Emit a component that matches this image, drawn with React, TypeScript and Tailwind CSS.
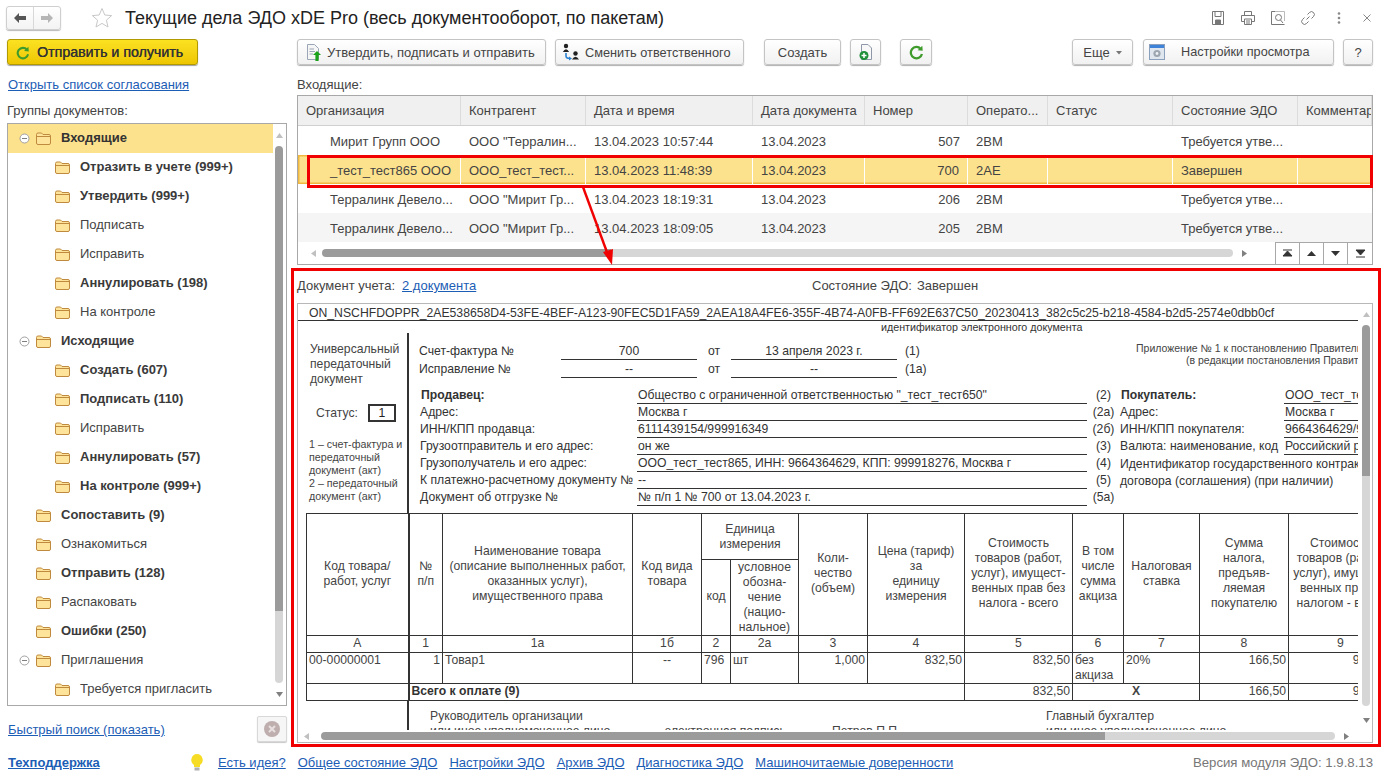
import React from "react";

const Folder = ({ className = "" }: { className?: string }) => (
  <svg width="15" height="13" viewBox="0 0 15 13" className={"shrink-0 " + className}>
    <path d="M.5 2.5 Q.5 1 2 1 H5.5 L7 2.5 H13 Q14.5 2.5 14.5 4 V11 Q14.5 12.5 13 12.5 H2 Q.5 12.5 .5 11 Z" fill="#fde49a" stroke="#c08a3e" />
    <path d="M1 4.5 H14" stroke="#c08a3e" strokeWidth="1" />
  </svg>
);

const Minus = () => (
  <svg width="11" height="11" viewBox="0 0 11 11" className="shrink-0">
    <circle cx="5.5" cy="5.5" r="4.5" fill="#fff" stroke="#a0a0a0" />
    <path d="M3 5.5 H8" stroke="#808080" />
  </svg>
);

const Refresh = ({ s = 16 }: { s?: number }) => (
  <svg width={s} height={s} viewBox="0 0 16 16" className="shrink-0">
    <path d="M12.5 4.2 A6 6 0 1 0 13.8 9.5" fill="none" stroke="#3f9b2b" strokeWidth="2.4" />
    <path d="M9.2 5.6 L14.6 6.2 L14.2 .8 Z" fill="#3f9b2b" />
  </svg>
);

const TriUp = () => <svg width="7" height="5" viewBox="0 0 7 5"><path d="M0 5 L3.5 0 L7 5Z" fill="#c0c0c0" /></svg>;
const TriDown = () => <svg width="7" height="5" viewBox="0 0 7 5"><path d="M0 0 L3.5 5 L7 0Z" fill="#808080" /></svg>;
const TriLeft = () => <svg width="5" height="7" viewBox="0 0 5 7"><path d="M5 0 L0 3.5 L5 7Z" fill="#c0c0c0" /></svg>;
const TriRight = () => <svg width="5" height="7" viewBox="0 0 5 7"><path d="M0 0 L5 3.5 L0 7Z" fill="#808080" /></svg>;

const Btn = ({ className = "", children }: { className?: string; children: React.ReactNode }) => (
  <div className={"h-[26px] pt-[2px] shrink-0 flex items-center border border-[#c4c4c4] rounded-[3px] bg-gradient-to-b from-white to-[#f1f1f1] shadow-[0_1px_1px_#b0b0b0] text-[#444] " + className}>
    {children}
  </div>
);

type T = [string, number, boolean, boolean];
const tree: T[] = [
  ["Входящие", 0, true, true],
  ["Отразить в учете (999+)", 1, true, false],
  ["Утвердить (999+)", 1, true, false],
  ["Подписать", 1, false, false],
  ["Исправить", 1, false, false],
  ["Аннулировать (198)", 1, true, false],
  ["На контроле", 1, false, false],
  ["Исходящие", 0, true, true],
  ["Создать (607)", 1, true, false],
  ["Подписать (110)", 1, true, false],
  ["Исправить", 1, false, false],
  ["Аннулировать (57)", 1, true, false],
  ["На контроле (999+)", 1, true, false],
  ["Сопоставить (9)", 0, true, false],
  ["Ознакомиться", 0, false, false],
  ["Отправить (128)", 0, true, false],
  ["Распаковать", 0, false, false],
  ["Ошибки (250)", 0, true, false],
  ["Приглашения", 0, false, true],
  ["Требуется пригласить", 1, false, false],
];

const cols = ["Организация", "Контрагент", "Дата и время", "Дата документа", "Номер", "Операто...", "Статус", "Состояние ЭДО", "Комментарий"];
const rows = [
  ["Мирит Групп ООО", 'ООО "Терралин...', "13.04.2023 10:57:44", "13.04.2023", "507", "2BM", "", "Требуется утве...", ""],
  ["_тест_тест865 ООО", "ООО_тест_тест...", "13.04.2023 11:48:39", "13.04.2023", "700", "2AE", "", "Завершен", ""],
  ["Терралинк Девело...", 'ООО "Мирит Гр...', "13.04.2023 18:19:31", "13.04.2023", "206", "2BM", "", "Требуется утве...", ""],
  ["Терралинк Девело...", 'ООО "Мирит Гр...', "13.04.2023 18:09:05", "13.04.2023", "205", "2BM", "", "Требуется утве...", ""],
];

const th = "border border-[#333] text-center align-middle font-normal p-0 text-[12.2px] leading-[15px]";
const thr = "border border-[#333] text-center align-middle font-normal p-0 pb-[2px] text-[12.2px] leading-[15px]";
const td = "border border-[#333] align-top p-0 text-[12.2px] leading-[15px]";

const SellerRow = ({ label, value, code, bold, buyer, bval, low }: { label: string; value: string; code: string; bold?: boolean; buyer?: string; bval?: string; low?: boolean }) => (
  <div className="h-[17px] flex items-end whitespace-nowrap">
    <div className={"w-[217px] shrink-0 pb-[1px] " + (bold ? "font-bold pl-[1px]" : "")}>{label}</div>
    <div className="w-[450px] shrink-0 border-b border-[#333] pl-[1px] h-[17px] leading-[16px]">{value}</div>
    <div className="w-[33px] shrink-0 text-center pb-[1px]">{code}</div>
    <div className={"w-[164px] shrink-0 " + (low ? "" : "pb-[1px] ") + (buyer === "Покупатель:" ? "font-bold pl-[1px]" : "")}>{buyer}</div>
    {bval !== undefined && <div className="w-[100px] shrink-0 border-b border-[#333] pl-[1px] h-[17px] leading-[16px]">{bval}</div>}
  </div>
);

export default function App() {
  return (
    <div className="w-[1382px] h-[771px] relative overflow-hidden bg-white font-['Liberation_Sans',Arial,sans-serif] text-[13px] text-[#444]">
      {/* header */}
      <div className="h-[36px] flex items-center pl-[6px] pr-[10px]">
        <div className="w-[55px] h-[24px] flex border border-[#cfcfcf] rounded-[3px] shadow-[0_1px_1px_#b8b8b8] bg-gradient-to-b from-white to-[#f3f3f3]">
          <div className="w-[27px] flex items-center justify-center border-r border-[#d8d8d8]">
            <svg width="12" height="10" viewBox="0 0 12 10"><path d="M0 5 L5 0 V3 H12 V7 H5 V10Z" fill="#555" /></svg>
          </div>
          <div className="flex-1 flex items-center justify-center">
            <svg width="12" height="10" viewBox="0 0 12 10"><path d="M12 5 L7 0 V3 H0 V7 H7 V10Z" fill="#b5b5b5" /></svg>
          </div>
        </div>
        <svg width="22" height="22" viewBox="0 0 22 22" className="ml-[30px]">
          <path d="M11 1.5 L13.8 8 L20.6 8.6 L15.4 13.2 L17 20 L11 16.4 L5 20 L6.6 13.2 L1.4 8.6 L8.2 8 Z" fill="#fff" stroke="#c8c8c8" />
        </svg>
        <div className="ml-[12px] text-[18px] text-[#222] whitespace-nowrap">Текущие дела ЭДО xDE Pro (весь документооборот, по пакетам)</div>
        <div className="ml-auto flex items-center gap-[14px] text-[#888]">
          <svg width="16" height="16" viewBox="0 0 16 16" fill="none" stroke="#777"><path d="M2.5 1.5 H13.5 V14.5 H2.5Z" /><path d="M5 1.5 V6.5 H11 V1.5" /><path d="M5.5 10 H10.5 V14.5 H5.5Z" fill="#777" /></svg>
          <svg width="16" height="16" viewBox="0 0 16 16" fill="none" stroke="#777"><path d="M4.5 5 V1.5 H11.5 V5" /><path d="M1.5 5.5 H14.5 V11.5 H1.5Z" /><path d="M4.5 9 H11.5 V14.5 H4.5Z" fill="#fff" /><path d="M6 11 H10 M6 13 H10" /></svg>
          <svg width="16" height="16" viewBox="0 0 16 16" fill="none" stroke="#777"><path d="M5 1.5 H1.5 V14.5 H14.5" /><circle cx="8.5" cy="7.5" r="3" /><path d="M10.5 10 L13 13" /><path d="M5 1.5 H14.5 V11" stroke="#bbb" /></svg>
          <svg width="16" height="16" viewBox="0 0 16 16" fill="none" stroke="#777"><path d="M6.5 9.5 L9.5 6.5" /><path d="M7.5 4.5 L9.5 2.5 A2.5 2.5 0 0 1 13.5 6.5 L11.5 8.5" /><path d="M8.5 11.5 L6.5 13.5 A2.5 2.5 0 0 1 2.5 9.5 L4.5 7.5" /></svg>
          <svg width="16" height="16" viewBox="0 0 16 16" className="ml-[1px]"><circle cx="8" cy="3.5" r="1.3" fill="#888" /><circle cx="8" cy="8" r="1.3" fill="#888" /><circle cx="8" cy="12.5" r="1.3" fill="#888" /></svg>
          <svg width="10" height="10" viewBox="0 0 10 10" className="ml-[1px]" stroke="#888"><path d="M1.5 1.5 L8.5 8.5 M8.5 1.5 L1.5 8.5" /></svg>
        </div>
      </div>

      {/* main */}
      <div className="flex h-[714px]">
        {/* left column */}
        <div className="w-[280px] ml-[7px] shrink-0">
          <div className="mt-[3px] w-[191px] h-[26px] pt-[1px] flex items-center pl-[8px] gap-[7px] border border-[#b09a00] rounded-[3px] bg-gradient-to-b from-[#fbe221] to-[#eec600] shadow-[0_1px_1px_#a0a0a0] text-[#333]">
            <Refresh s={14} />
            <span className="text-[14.2px] [text-shadow:0.3px_0_0_#333] whitespace-nowrap">Отправить и получить</span>
          </div>
          <div className="mt-[11px] h-[16px] leading-[18px] pl-[1px] text-[#1c5db5] underline whitespace-nowrap">Открыть список согласования</div>
          <div className="mt-[10px] h-[16px] leading-[18px]">Группы документов:</div>
          <div className="mt-[5px] h-[583px] border border-[#a8a8a8] flex">
            <div className="w-[265px] shrink-0 overflow-hidden">
              {tree.map((t, i) => (
                <div key={i} className={"h-[29px] flex items-center whitespace-nowrap " + (i === 0 ? "bg-[#fde28d] text-[#333] " : "") + (t[2] ? "font-bold text-[#3a3a3a]" : "")}>
                  {t[1] === 1 ? (
                    <>
                      <Folder className="ml-[47px]" />
                      <span className="ml-[10px] -mt-[2px]">{t[0]}</span>
                    </>
                  ) : (
                    <>
                      {t[3] ? <span className="ml-[11px] w-[17px] shrink-0"><Minus /></span> : <span className="ml-[11px] w-[17px] shrink-0" />}
                      <Folder />
                      <span className="ml-[10px] -mt-[2px]">{t[0]}</span>
                    </>
                  )}
                </div>
              ))}
            </div>
            <div className="ml-[2px] w-[8px] flex flex-col items-center pt-[9px] pb-[8px]">
              <TriUp />
              <div className="mt-[8px] w-[8px] h-[465px] rounded-t-[4px] bg-[#9b9b9b]" />
              <div className="w-[8px] h-[72px] rounded-b-[4px] bg-[#d6d6d6]" />
              <div className="mt-auto"><TriDown /></div>
            </div>
          </div>
          <div className="mt-[10px] h-[26px] flex items-center justify-between">
            <span className="text-[#1c5db5] underline whitespace-nowrap pl-[1px] pt-[2px]">Быстрый поиск (показать)</span>
            <div className="w-[30px] h-[26px] border border-[#d8d8d8] rounded-[2px] bg-[#f6f6f6] shadow-[0_1px_1px_#c8c8c8] flex items-center justify-center">
              <svg width="16" height="16" viewBox="0 0 16 16"><circle cx="8" cy="8" r="8" fill="#bfaeae" /><path d="M5 5 L11 11 M11 5 L5 11" stroke="#e8e0e0" strokeWidth="2" /></svg>
            </div>
          </div>
        </div>

        {/* right column */}
        <div className="w-[1076px] ml-[10px] shrink-0">
          <div className="mt-[3px] flex">
            <Btn className="w-[249px] pl-[8px]">
              <svg width="15" height="17" viewBox="0 0 15 17" className="shrink-0 -mt-[2px]"><path d="M1.5 .5 H8.5 L12.5 4.5 V15.5 H1.5Z" fill="#f6f6f6" stroke="#9aa5b5" /><path d="M3.5 5 H8 M3.5 7.5 H9 M3.5 10 H7" stroke="#9aa5b5" /><path d="M11 7 L15 11 H12.6 V17 H9.4 V11 H7Z" fill="#1ca11c" /></svg>
              <span className="ml-[6px] whitespace-nowrap">Утвердить, подписать и отправить</span>
            </Btn>
            <Btn className="w-[189px] ml-[9px] pl-[6px]">
              <svg width="18" height="18" viewBox="0 0 18 18" className="shrink-0 -mt-[2px]"><circle cx="4" cy="3" r="2.2" fill="#222" /><path d="M0.8 9 Q4 3.5 7.2 9Z" fill="#222" /><circle cx="13.5" cy="10.5" r="2.2" fill="#222" /><path d="M10 16.5 Q13.5 11 17 16.5Z" fill="#222" /><path d="M4 10 V13 Q4 15.5 8 15.5" fill="none" stroke="#2a80d0" strokeWidth="1.6" /><path d="M7 13.5 L10 15.5 L7 17.5Z" fill="#2a80d0" /></svg>
              <span className="ml-[5px] whitespace-nowrap text-[12.75px]">Сменить ответственного</span>
            </Btn>
            <Btn className="w-[77px] ml-[20px] justify-center">Создать</Btn>
            <Btn className="w-[31px] ml-[9px] justify-center">
              <svg width="16" height="18" viewBox="0 0 16 18" className="-mt-[2px]"><path d="M3.5 1.5 H10 L13.5 5 V16.5 H3.5Z" fill="#f8f8f8" stroke="#8e98a8" /><circle cx="6" cy="12.5" r="4.5" fill="#1f8f3a" /><path d="M3.5 12.5 H8.5 M6 10 V15" stroke="#fff" strokeWidth="1.5" /></svg>
            </Btn>
            <Btn className="w-[32px] ml-[19px] justify-center"><span className="-mt-[2px]"><Refresh s={15} /></span></Btn>
            <Btn className="w-[61px] ml-[140px] justify-center gap-[6px]">
              Еще
              <svg width="6" height="4" viewBox="0 0 6 4"><path d="M0 0 L3 3.5 L6 0Z" fill="#777" /></svg>
            </Btn>
            <Btn className="w-[191px] ml-[10px] pl-[5px]">
              <svg width="16" height="16" viewBox="0 0 16 16" className="shrink-0 -mt-[2px]"><rect x=".5" y=".5" width="15" height="15" fill="#dfe6ee" stroke="#8aa0bd" /><rect x="1" y="1" width="14" height="3" fill="#3f83d8" /><circle cx="8" cy="9.5" r="3.6" fill="#9ca6b0" /><circle cx="8" cy="9.5" r="1.4" fill="#eef1f4" /></svg>
              <span className="ml-[16px] whitespace-nowrap text-[12.7px]">Настройки просмотра</span>
            </Btn>
            <Btn className="w-[30px] ml-[9px] justify-center">?</Btn>
          </div>
          <div className="mt-[11px] h-[16px] leading-[18px]">Входящие:</div>

          {/* list */}
          <div className="mt-[3px] h-[170px] w-[1076px] border border-[#a8a8a8] overflow-hidden">
            <div className="grid grid-cols-[163px_125px_167px_112px_103px_80px_125px_125px_74px] h-[30px] bg-[#f0f0f0] border-b border-[#d0d0d0]">
              {cols.map((c, i) => (
                <div key={i} className="pl-[8px] leading-[29px] border-r border-[#dcdcdc] whitespace-nowrap overflow-hidden">{c}</div>
              ))}
            </div>
            {rows.map((r, ri) => (
              <div key={ri} className={"grid grid-cols-[163px_125px_167px_112px_103px_80px_125px_125px_74px] h-[29px] " + (ri === 1 ? "bg-[#fde28d] shadow-[inset_0_0_0_1.5px_#f0b840]" : ri === 3 ? "bg-[#f5f5f5]" : "bg-white")}>
                {r.map((c, i) => (
                  <div key={i} className={"leading-[31px] whitespace-nowrap overflow-hidden " + (ri === 1 ? "border-r border-white " : "") + (i === 0 ? "pl-[32px]" : i === 4 ? "pr-[8px] text-right" : "pl-[8px]")}>{c}</div>
                ))}
              </div>
            ))}
            <div className="h-[22px] flex items-center">
              <div className="w-[24px] flex justify-end pr-[6px]"><TriLeft /></div>
              <div className="w-[289px] h-[8px] rounded-l-[4px] bg-[#9b9b9b]" />
              <div className="w-[623px] h-[8px] rounded-r-[4px] bg-[#d6d6d6]" />
              <div className="w-[42px] pl-[9px]"><TriRight /></div>
              <div className="flex h-[22px] border-l border-t border-[#a8a8a8]">
                {["M1 7 L5.5 2 L10 7Z M1 1 H10", "M1 7 L5.5 2 L10 7Z", "M1 2 L5.5 7 L10 2Z", "M1 1 L5.5 6 L10 1Z M1 8 H10"].map((d, i) => (
                  <div key={i} className={"w-[24px] flex items-center justify-center " + (i < 3 ? "border-r border-[#a8a8a8]" : "")}>
                    <svg width="11" height="9" viewBox="0 0 11 9"><path d={d} fill="#333" stroke="#333" strokeWidth={i === 0 || i === 3 ? 1 : 0} /></svg>
                  </div>
                ))}
              </div>
            </div>
          </div>

          {/* doc panel */}
          <div className="mt-[12px] h-[16px] leading-[18px] flex">
            <div className="w-[515px] shrink-0">Документ учета:<span className="ml-[7px] text-[#1c5db5] underline">2 документа</span></div>
            <div>Состояние ЭДО:<span className="ml-[5px]">Завершен</span></div>
          </div>
          <div className="mt-[10px] h-[440px] border border-[#b8b8b8] flex flex-col text-[12.2px] leading-[15px] text-[#333]">
            <div className="flex h-[426px]">
              <div className="w-[1060px] shrink-0 overflow-hidden">
                <div className="h-[17px] border-b border-[#333] pl-[11px] whitespace-nowrap leading-[18px] text-[12.23px]">ON_NSCHFDOPPR_2AE538658D4-53FE-4BEF-A123-90FEC5D1FA59_2AEA18A4FE6-355F-4B74-A0FB-FF692E637C50_20230413_382c5c25-b218-4584-b2d5-2574e0dbb0cf</div>
                <div className="h-[12px] pl-[583px] text-[10.7px] leading-[13px] whitespace-nowrap">идентификатор электронного документа</div>
                {/* head section */}
                <div className="flex h-[180px] mt-[0px] whitespace-nowrap">
                  <div className="w-[101px] ml-[8px] shrink-0 border-r-2 border-[#333] pt-[9px] text-[#444] box-content">
                    <div className="pl-[4px]">Универсальный</div>
                    <div className="pl-[4px]">передаточный</div>
                    <div className="pl-[4px]">документ</div>
                    <div className="mt-[17px] flex items-center h-[18px] pl-[10px]">
                      Статус:
                      <span className="ml-[10px] w-[28px] h-[18px] border-2 border-[#333] flex items-center justify-center text-[#222]">1</span>
                    </div>
                    <div className="mt-[16px] text-[10.7px] leading-[13px] pl-[3px]">
                      <div>1 – счет-фактура и</div>
                      <div>передаточный</div>
                      <div>документ (акт)</div>
                      <div>2 – передаточный</div>
                      <div>документ (акт)</div>
                    </div>
                  </div>
                  <div className="flex-1 min-w-0 overflow-hidden">
                    <div className="flex pt-[9px]">
                      <div className="w-[490px] shrink-0">
                        {[["Счет-фактура №", "700", "13 апреля 2023 г.", "(1)"], ["Исправление №", "--", "--", "(1а)"]].map((l, i) => (
                          <div key={i} className="h-[18px] flex items-end leading-[16px]">
                            <div className="w-[152px] shrink-0 pl-[10px] pb-[1px]">{l[0]}</div>
                            <div className="w-[136px] shrink-0 text-center border-b border-[#333] pb-[0px]">{l[1]}</div>
                            <div className="w-[34px] shrink-0 pl-[11px] pb-[1px]">от</div>
                            <div className="w-[166px] shrink-0 text-center border-b border-[#333]">{l[2]}</div>
                            <div className="ml-[8px] pb-[1px]">{l[3]}</div>
                          </div>
                        ))}
                      </div>
                      <div className="text-[10.5px] leading-[12px] text-[#444]">
                        <div className="pl-[237px]">Приложение № 1 к постановлению Правительства РФ</div>
                        <div className="pl-[287px]">(в редакции постановления Правительства РФ)</div>
                      </div>
                    </div>
                    <div className="mt-[9px] pl-[11px] leading-[15px]">
                      <SellerRow bold label="Продавец:" value={'Общество с ограниченной ответственностью "_тест_тест650"'} code="(2)" buyer="Покупатель:" bval="ООО_тест_тест865" />
                      <SellerRow label="Адрес:" value="Москва г" code="(2а)" buyer="Адрес:" bval="Москва г" />
                      <SellerRow label="ИНН/КПП продавца:" value="6111439154/999916349" code="(2б)" buyer="ИНН/КПП покупателя:" bval="9664364629/999918276" />
                      <SellerRow label="Грузоотправитель и его адрес:" value="он же" code="(3)" buyer="Валюта: наименование, код" bval="Российский рубль" />
                      <SellerRow low label="Грузополучатель и его адрес:" value="ООО_тест_тест865, ИНН: 9664364629, КПП: 999918276, Москва г" code="(4)" buyer="Идентификатор государственного контракта," />
                      <SellerRow low label="К платежно-расчетному документу №" value="--" code="(5)" buyer="договора (соглашения) (при наличии)" />
                      <SellerRow label="Документ об отгрузке №" value="№ п/п 1 № 700 от 13.04.2023 г." code="(5а)" />
                    </div>
                  </div>
                </div>
                {/* goods table */}
                <table className="ml-[8px] table-fixed border-collapse w-[1086px] text-[#444]">
                  <colgroup>
                    <col className="w-[102px]" /><col className="w-[34px]" /><col className="w-[190px]" /><col className="w-[69px]" /><col className="w-[29px]" /><col className="w-[68px]" /><col className="w-[69px]" /><col className="w-[97px]" /><col className="w-[108px]" /><col className="w-[51px]" /><col className="w-[76px]" /><col className="w-[89px]" /><col className="w-[104px]" />
                  </colgroup>
                  <thead>
                    <tr className="h-[46px]">
                      <th rowSpan={2} className={thr + " border-r-2"}>Код товара/<br />работ, услуг</th>
                      <th rowSpan={2} className={thr}>№<br />п/п</th>
                      <th rowSpan={2} className={thr}>Наименование товара<br />(описание выполненных работ,<br />оказанных услуг),<br />имущественного права</th>
                      <th rowSpan={2} className={thr}>Код вида<br />товара</th>
                      <th colSpan={2} className={th}>Единица<br />измерения</th>
                      <th rowSpan={2} className={thr}>Коли-<br />чество<br />(объем)</th>
                      <th rowSpan={2} className={thr}>Цена (тариф)<br />за<br />единицу<br />измерения</th>
                      <th rowSpan={2} className={thr}>Стоимость<br />товаров (работ,<br />услуг), имущест-<br />венных прав без<br />налога - всего</th>
                      <th rowSpan={2} className={thr}>В том<br />числе<br />сумма<br />акциза</th>
                      <th rowSpan={2} className={thr}>Налоговая<br />ставка</th>
                      <th rowSpan={2} className={thr}>Сумма<br />налога,<br />предъяв-<br />ляемая<br />покупателю</th>
                      <th rowSpan={2} className={thr}>Стоимость<br />товаров (работ,<br />услуг), имущест-<br />венных прав с<br />налогом - всего</th>
                    </tr>
                    <tr className="h-[76px]">
                      <th className={thr}>код</th>
                      <th className={th}>условное<br />обозна-<br />чение<br />(нацио-<br />нальное)</th>
                    </tr>
                  </thead>
                  <tbody>
                    <tr className="h-[17px]">
                      {["А", "1", "1а", "1б", "2", "2а", "3", "4", "5", "6", "7", "8", "9"].map((c, i) => (
                        <td key={i} className={td + " text-center " + (i === 0 ? "border-r-2" : "")}>{c}</td>
                      ))}
                    </tr>
                    <tr className="h-[31px]">
                      <td className={td + " border-r-2 pl-[2px]"}>00-00000001</td>
                      <td className={td + " text-right pr-[2px]"}>1</td>
                      <td className={td + " pl-[2px]"}>Товар1</td>
                      <td className={td + " text-center"}>--</td>
                      <td className={td + " pl-[2px]"}>796</td>
                      <td className={td + " pl-[2px]"}>шт</td>
                      <td className={td + " text-right pr-[2px]"}>1,000</td>
                      <td className={td + " text-right pr-[2px]"}>832,50</td>
                      <td className={td + " text-right pr-[2px]"}>832,50</td>
                      <td className={td + " pl-[2px]"}>без<br />акциза</td>
                      <td className={td + " pl-[2px]"}>20%</td>
                      <td className={td + " text-right pr-[2px]"}>166,50</td>
                      <td className={td + " text-right pr-[2px]"}>999,00</td>
                    </tr>
                    <tr className="h-[17px]">
                      <td className={td + " border-r-2"} />
                      <td colSpan={7} className={td + " font-bold pl-[2px] text-[#333]"}>Всего к оплате (9)</td>
                      <td className={td + " text-right pr-[2px]"}>832,50</td>
                      <td colSpan={2} className={td + " text-center font-bold"}>Х</td>
                      <td className={td + " text-right pr-[2px]"}>166,50</td>
                      <td className={td + " text-right pr-[2px]"}>999,00</td>
                    </tr>
                  </tbody>
                </table>
                <div className="flex h-[40px] whitespace-nowrap text-[#444]">
                  <div className="w-[101px] ml-[8px] border-r-2 border-[#333] box-content" />
                  <div className="pl-[21px] pt-[8px] w-[236px] shrink-0">
                    <div>Руководитель организации</div>
                    <div>или иное уполномоченное лицо</div>
                  </div>
                  <div className="pt-[23px] w-[145px] shrink-0 pl-[20px]">электронная подпись</div>
                  <div className="pt-[23px] w-[255px] shrink-0 pl-[42px]">Петров П.П.</div>
                  <div className="pt-[8px] pl-[1px]">
                    <div>Главный бухгалтер</div>
                    <div>или иное уполномоченное лицо</div>
                  </div>
                </div>
              </div>
              <div className="w-[15px] flex flex-col items-center pt-[8px] pb-[7px] pl-[2px]">
                <TriUp />
                <div className="mt-[8px] w-[8px] h-[151px] rounded-t-[4px] bg-[#9b9b9b]" />
                <div className="w-[8px] h-[230px] rounded-b-[4px] bg-[#d6d6d6]" />
                <div className="mt-auto"><TriDown /></div>
              </div>
            </div>
            <div className="h-[12px] flex items-center">
              <div className="w-[16px] flex justify-end pr-[5px]"><TriLeft /></div>
              <div className="w-[784px] h-[8px] ml-[7px] rounded-l-[4px] bg-[#9b9b9b]" />
              <div className="w-[230px] h-[8px] rounded-r-[4px] bg-[#d6d6d6]" />
              <div className="ml-[9px]"><TriRight /></div>
            </div>
          </div>
        </div>
      </div>

      {/* footer */}
      <div className="h-[21px] pt-[5px] pl-[8px] pr-[9px] flex items-center whitespace-nowrap text-[#1c5db5]">
        <span className="font-bold w-[182px] shrink-0 underline">Техподдержка</span>
        <svg width="14" height="18" viewBox="0 0 14 18" className="shrink-0 mr-[14px] -mt-[3px]"><path d="M7 1 A6 6 0 0 1 10 12 V14 H4 V12 A6 6 0 0 1 7 1Z" fill="#f6dc25" /><rect x="4.5" y="14.5" width="5" height="3" fill="#b0b0b0" /></svg>
        <span className="underline">Есть идея?</span>
        <span className="ml-[12px] underline">Общее состояние ЭДО</span>
        <span className="ml-[12px] underline">Настройки ЭДО</span>
        <span className="ml-[12px] underline">Архив ЭДО</span>
        <span className="ml-[12px] underline">Диагностика ЭДО</span>
        <span className="ml-[12px] underline">Машиночитаемые доверенности</span>
        <span className="ml-auto text-[#777] text-[13.2px]">Версия модуля ЭДО: 1.9.8.13</span>
      </div>

      {/* annotations */}
      <div className="absolute left-[307px] top-[155px] w-[1066px] h-[33px] border-[3px] border-[#f00000] pointer-events-none" />
      <div className="absolute left-[291px] top-[268px] w-[1090px] h-[479px] border-[3px] border-[#f00000] pointer-events-none" />
      <svg className="absolute left-[575px] top-[185px] pointer-events-none" width="50" height="85" viewBox="0 0 50 85">
        <path d="M8 2 L33 70" stroke="#f00000" strokeWidth="2.4" fill="none" />
        <path d="M28 67 L38 64 L37 80Z" fill="#f00000" />
      </svg>
    </div>
  );
}
